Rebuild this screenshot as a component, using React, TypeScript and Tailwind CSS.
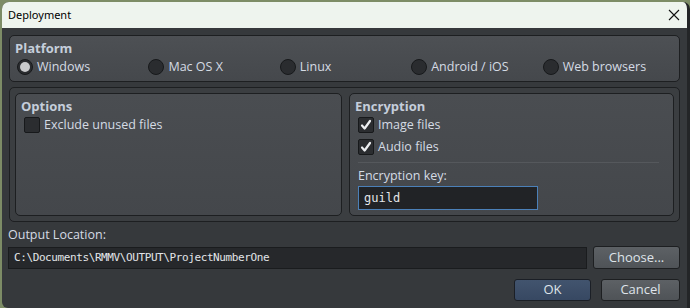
import React from "react";

const ui = { fontFamily: '"Open Sans", "Noto Sans", sans-serif' };
const mono = { fontFamily: '"DejaVu Sans Mono", "Liberation Mono", monospace' };

function Radio({ label, checked }: { label: string; checked?: boolean }) {
  return (
    <div className="flex items-center gap-[4px] w-[132px]">
      <div className="w-[16px] h-[16px] rounded-full bg-[#2a2c2f] border border-[#17191b] flex items-center justify-center">
        {checked && <div className="w-[10px] h-[10px] rounded-full bg-[#c9cacc]" />}
      </div>
      <span className="text-[12.5px] text-[#d5dbe4] leading-none">{label}</span>
    </div>
  );
}

function Check({ label, checked }: { label: string; checked?: boolean }) {
  return (
    <div className="flex items-center gap-[4px]">
      <div className="w-[16px] h-[16px] rounded-[2px] bg-[#2b2d30] border border-[#17191b] flex items-center justify-center">
        {checked && (
          <svg width="12" height="12" viewBox="0 0 12 12">
            <path d="M2 6.5 L4.6 9.5 L10 2" stroke="#eceef0" strokeWidth="2.2" fill="none" strokeLinecap="round" strokeLinejoin="round" />
          </svg>
        )}
      </div>
      <span className="text-[12.5px] text-[#d5dbe4] leading-none">{label}</span>
    </div>
  );
}

export default function App() {
  return (
    <div className="w-[690px] h-[308px] bg-[#7d8c66] pl-[2px] pt-[2px] overflow-hidden" style={ui}>
      <div className="w-[688px] h-[306px] rounded-tl-[7px] rounded-tr-[7px] rounded-bl-[6px] overflow-hidden flex flex-col bg-[#36393c] border-r-[3px] border-[#232527]">
        <div className="h-[26px] bg-[#eef4ee] flex items-center justify-between pl-[6px] pr-[7px]">
          <span className="text-[11px] text-black" style={{ fontFamily: '"Noto Sans", sans-serif' }}>Deployment</span>
          <svg width="12" height="12" viewBox="0 0 12 12">
            <path d="M1 1 L11 11 M11 1 L1 11" stroke="#111" strokeWidth="1.1" />
          </svg>
        </div>
        <div className="flex flex-col px-[7px] pt-[7px]">
          <div className="h-[47px] rounded-[5px] border border-[#1d1f21] bg-gradient-to-b from-[#4d5054] to-[#45484c] px-[5px] pt-[3px]">
            <div className="text-[13px] font-bold text-[#c5cedb] leading-[18px]">Platform</div>
            <div className="flex pl-[2px] mt-[2px]">
              <Radio label="Windows" checked />
              <Radio label="Mac OS X" />
              <Radio label="Linux" />
              <Radio label="Android / iOS" />
              <Radio label="Web browsers" />
            </div>
          </div>
          <div className="mt-[5px] h-[135px] rounded-[5px] border border-[#1d1f21] bg-[#3b3e41] p-[5px] flex gap-[7px]">
            <div className="w-[327px] h-[123px] rounded-[5px] border border-[#1d1f21] bg-gradient-to-b from-[#4a4d51] to-[#44474b] px-[5px] pt-[3px]">
              <div className="text-[13px] font-bold text-[#c5cedb] leading-[18px]">Options</div>
              <div className="pl-[3px] mt-[2px]">
                <Check label="Exclude unused files" />
              </div>
            </div>
            <div className="flex-1 h-[123px] rounded-[5px] border border-[#1d1f21] bg-gradient-to-b from-[#4a4d51] to-[#44474b] px-[5px] pt-[3px]">
              <div className="text-[13px] font-bold text-[#c5cedb] leading-[18px]">Encryption</div>
              <div className="pl-[3px] mt-[2px] flex flex-col gap-[6px]">
                <Check label="Image files" checked />
                <Check label="Audio files" checked />
              </div>
              <div className="ml-[3px] mr-[9px] mt-[7px] h-[1px] bg-[#34373a] border-b border-[#55585c]" />
              <div className="pl-[3px] mt-[5px] text-[12.5px] text-[#d5dbe4] leading-[16px]">Encryption key:</div>
              <div className="ml-[3px] mt-[2px] w-[180px] h-[24px] bg-[#212326] border border-[#4b80b8] flex items-center pl-[5px]">
                <span className="text-[12px] text-[#e4e6e8]" style={mono}>guild</span>
              </div>
            </div>
          </div>
        </div>
        <div className="flex flex-col px-[6px] mt-[4px]">
          <div className="text-[12.5px] text-[#d5dbe4] leading-[18px]">Output Location:</div>
          <div className="flex gap-[6px] mt-[3px] pr-[1px]">
            <div className="w-[579px] shrink-0 h-[22px] bg-[#26282b] border border-[#1a1c1e] flex items-center pl-[5px]">
              <span className="text-[11px] tracking-[-0.4px] text-[#e2e5e8]" style={mono}>C:\Documents\RMMV\OUTPUT\ProjectNumberOne</span>
            </div>
            <button className="w-[87px] shrink-0 h-[23px] -mt-[1px] rounded-[3px] border border-[#1d1f21] bg-gradient-to-b from-[#5d6165] to-[#4f5357] text-[13px] text-[#dfe4ea]">Choose...</button>
          </div>
          <div className="flex justify-end gap-[10px] mt-[10px] pr-[1px]">
            <button className="w-[77px] h-[22px] rounded-[3px] border border-[#1b1f26] bg-gradient-to-b from-[#42546e] to-[#374862] text-[13px] text-[#dfe4ea]">OK</button>
            <button className="w-[79px] h-[22px] rounded-[3px] border border-[#1d1f21] bg-gradient-to-b from-[#5d6165] to-[#4f5357] text-[13px] text-[#dfe4ea]">Cancel</button>
          </div>
        </div>
      </div>
    </div>
  );
}
